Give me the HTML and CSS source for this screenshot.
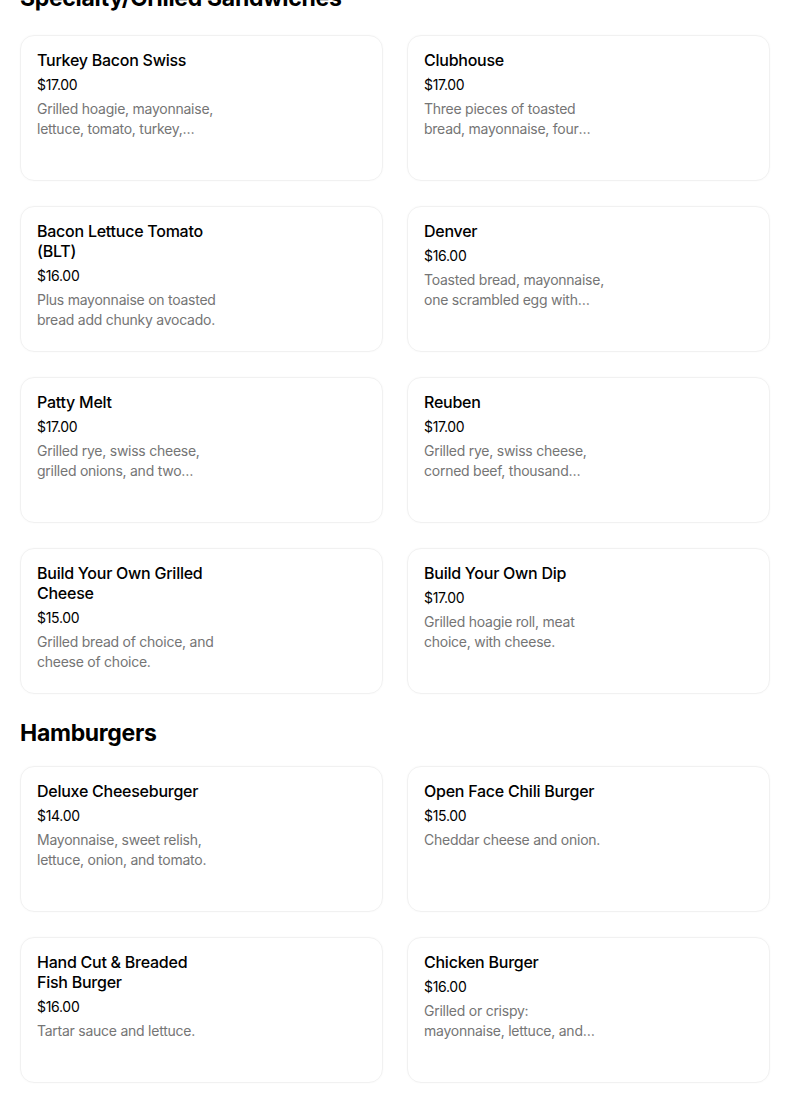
FILE: index.html
```html
<!DOCTYPE html>
<html lang="en">
<head>
<meta charset="utf-8">
<title>Menu</title>
<link rel="stylesheet" href="styles.css">
</head>
<body>
<main class="menu">
  <section class="section section-first">
    <h2 class="section-title">Specialty/Grilled Sandwiches</h2>
    <ul class="grid">
      <li class="card"><div class="text">
        <div class="name">Turkey Bacon Swiss</div>
        <div class="price">$17.00</div>
        <div class="desc">Grilled hoagie, mayonnaise, lettuce, tomato, turkey, bacon, and swiss cheese.</div>
      </div></li>
      <li class="card"><div class="text">
        <div class="name">Clubhouse</div>
        <div class="price">$17.00</div>
        <div class="desc">Three pieces of toasted bread, mayonnaise, four slices of bacon, lettuce, tomato, and turkey.</div>
      </div></li>
      <li class="card"><div class="text">
        <div class="name">Bacon Lettuce Tomato (BLT)</div>
        <div class="price">$16.00</div>
        <div class="desc">Plus mayonnaise on toasted bread add chunky avocado.</div>
      </div></li>
      <li class="card"><div class="text">
        <div class="name">Denver</div>
        <div class="price">$16.00</div>
        <div class="desc">Toasted bread, mayonnaise, one scrambled egg with ham, onions, and green peppers.</div>
      </div></li>
      <li class="card"><div class="text">
        <div class="name">Patty Melt</div>
        <div class="price">$17.00</div>
        <div class="desc">Grilled rye, swiss cheese, grilled onions, and two burger patties.</div>
      </div></li>
      <li class="card"><div class="text">
        <div class="name">Reuben</div>
        <div class="price">$17.00</div>
        <div class="desc">Grilled rye, swiss cheese, corned beef, thousand island, and sauerkraut.</div>
      </div></li>
      <li class="card"><div class="text">
        <div class="name">Build Your Own Grilled Cheese</div>
        <div class="price">$15.00</div>
        <div class="desc">Grilled bread of choice, and cheese of choice.</div>
      </div></li>
      <li class="card"><div class="text">
        <div class="name">Build Your Own Dip</div>
        <div class="price">$17.00</div>
        <div class="desc">Grilled hoagie roll, meat choice, with cheese.</div>
      </div></li>
    </ul>
  </section>
  <section class="section">
    <h2 class="section-title">Hamburgers</h2>
    <ul class="grid">
      <li class="card"><div class="text">
        <div class="name">Deluxe Cheeseburger</div>
        <div class="price">$14.00</div>
        <div class="desc">Mayonnaise, sweet relish, lettuce, onion, and tomato.</div>
      </div></li>
      <li class="card"><div class="text">
        <div class="name">Open Face Chili Burger</div>
        <div class="price">$15.00</div>
        <div class="desc">Cheddar cheese and onion.</div>
      </div></li>
      <li class="card"><div class="text">
        <div class="name">Hand Cut &amp; Breaded Fish Burger</div>
        <div class="price">$16.00</div>
        <div class="desc">Tartar sauce and lettuce.</div>
      </div></li>
      <li class="card"><div class="text">
        <div class="name">Chicken Burger</div>
        <div class="price">$16.00</div>
        <div class="desc">Grilled or crispy: mayonnaise, lettuce, and tomato.</div>
      </div></li>
    </ul>
  </section>
</main>
</body>
</html>
```

FILE: styles.css
```css
* { box-sizing: border-box; }
html, body { margin: 0; padding: 0; background: #fff; }
body {
  font-family: Inter, "Liberation Sans", sans-serif;
  color: #000;
  overflow: hidden;
}
.menu {
  width: 750px;
  margin-left: 20px;
  margin-top: -18px;
}
.section { margin-bottom: 23px; }
.section-title {
  margin: 0;
  font-size: 23px;
  line-height: 32px;
  font-weight: 700;
  letter-spacing: -0.3px;
  padding-bottom: 17px;
}
.section-first .section-title { padding-bottom: 21px; }
.grid {
  list-style: none;
  margin: 0;
  padding: 0;
  display: grid;
  grid-template-columns: 1fr 1fr;
  column-gap: 24px;
  row-gap: 25px;
}
.card {
  height: 146px;
  border: 1px solid #f1f1f1;
  border-radius: 14px;
  padding: 14px 16px;
  box-shadow: 0 0 2px rgba(0,0,0,0.03);
}
.text { width: 186px; }
.name {
  max-width: 178px;
  font-size: 16px;
  line-height: 20px;
  font-weight: 500;
  letter-spacing: -0.25px;
}
.price {
  margin-top: 5px;
  font-size: 14px;
  line-height: 20px;
  letter-spacing: -0.3px;
}
.desc {
  margin-top: 4px;
  font-size: 14px;
  line-height: 20px;
  letter-spacing: -0.25px;
  color: #757575;
  display: -webkit-box;
  -webkit-line-clamp: 2;
  -webkit-box-orient: vertical;
  overflow: hidden;
}
```
